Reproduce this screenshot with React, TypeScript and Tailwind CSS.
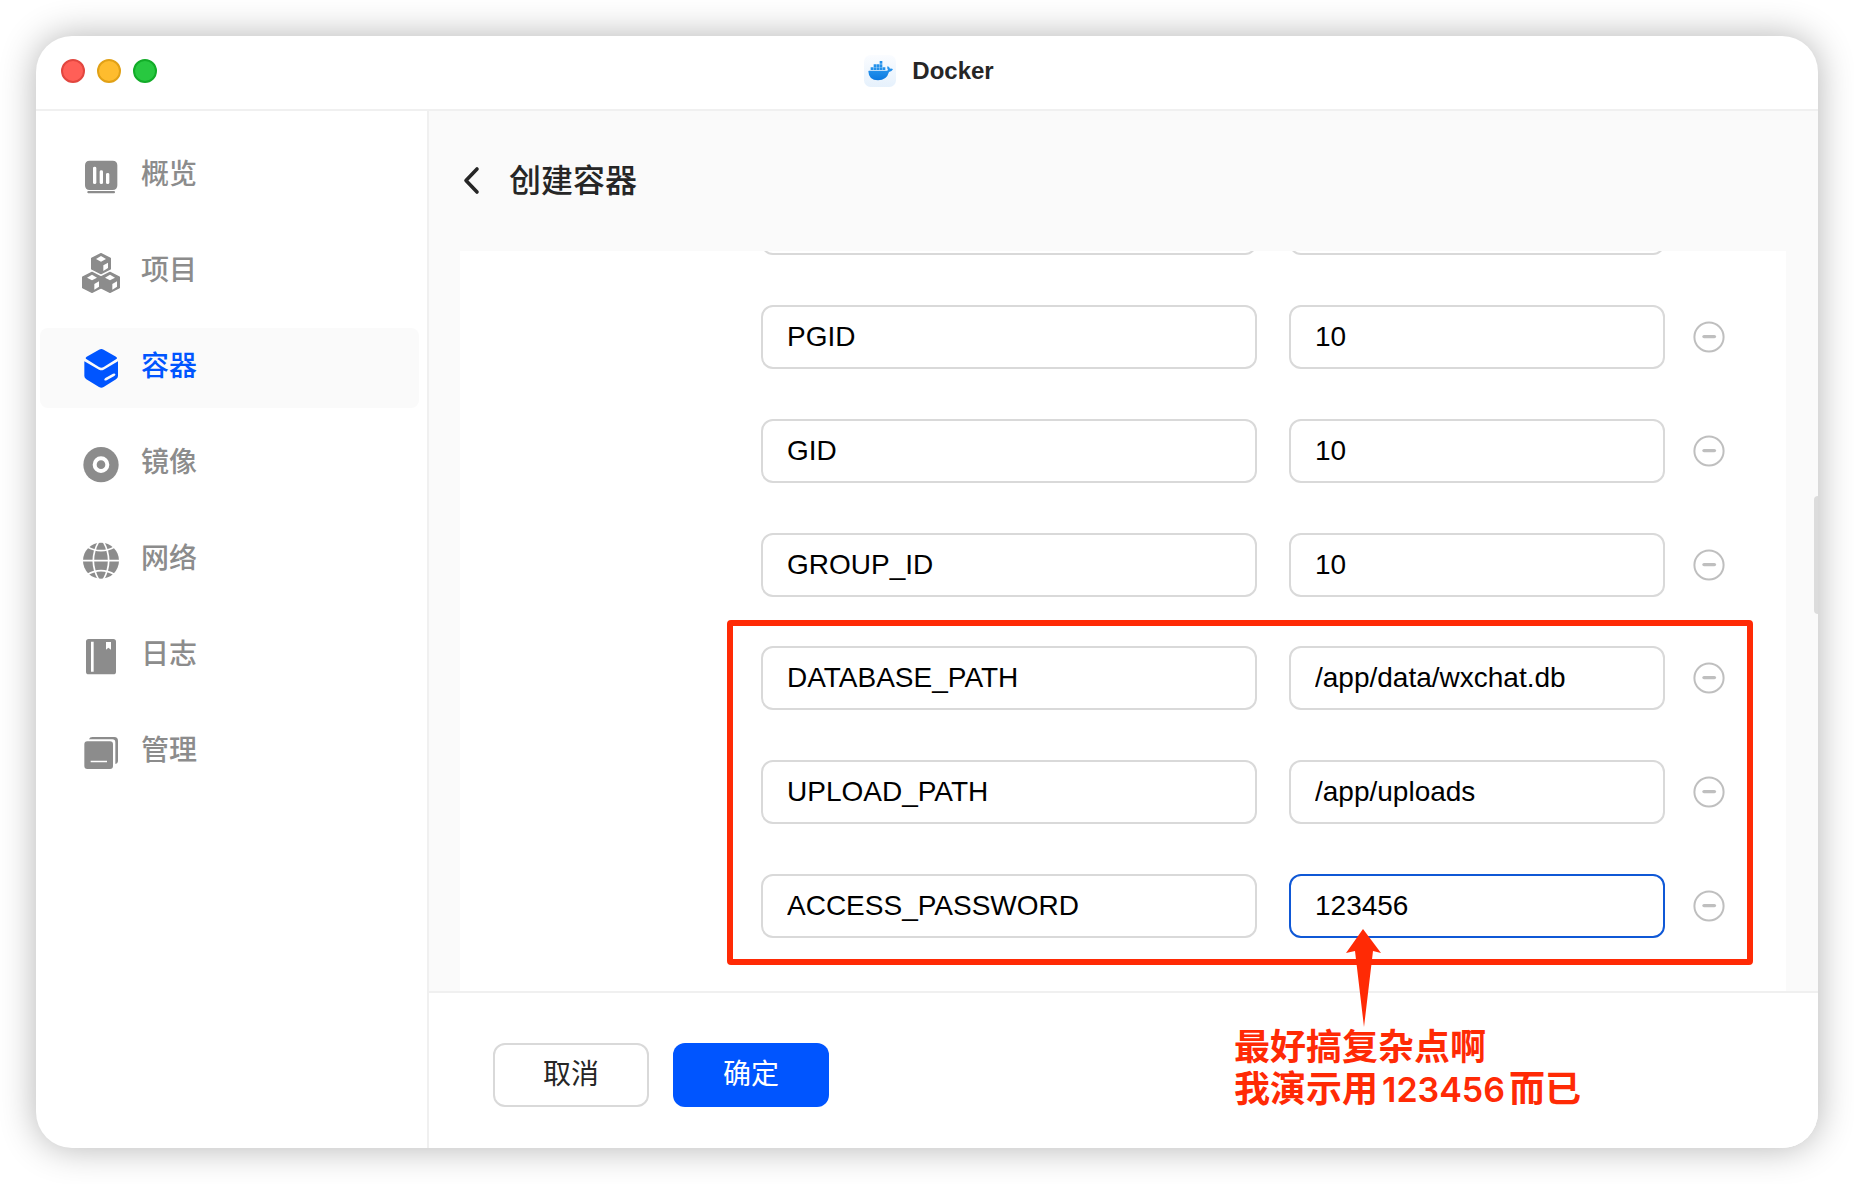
import { useState } from 'react';
import type { ReactNode } from 'react';
import clsx from 'clsx';

interface NavItem {
  id: string;
  label: string;
  icon: ReactNode;
}

interface EnvVar {
  name: string;
  value: string;
}

const OverviewIcon = () => (
  <svg viewBox="0 0 120 120" className="size-10 overflow-visible" fill="currentColor" aria-hidden="true">
    <path
      fillRule="evenodd"
      d="M26 14h69q14 0 14 14v60q0 14-14 14H26q-14 0-14-14V28q0-14 14-14ZM36 36v44q0 4 5 4t5-4V36q0-4-5-4t-5 4Zm20 11v33q0 4 5 4t5-4V47q0-4-5-4t-5 4Zm19 8v25q0 4 5 4t5-4V55q0-4-5-4t-5 4Z"
    />
    <rect x="19" y="105" width="83" height="7" rx="3" />
  </svg>
);

const Cube = ({ x, y }: { x: number; y: number }) => (
  <g transform={`translate(${x} ${y})`}>
    <path d="M30 2 58 16v32L30 62 2 48V16Z" strokeWidth="4" stroke="currentColor" strokeLinejoin="round" />
    <path d="M30 9 45 18 30 26 15 18Z" fill="#fff" />
    <path d="M37 37 51 29V45L37 54Z" fill="#fff" />
  </g>
);

const ProjectIcon = () => (
  <svg viewBox="0 0 120 120" className="size-10 overflow-visible" fill="currentColor" aria-hidden="true">
    <Cube x={30} y={3} />
    <Cube x={3} y={59} />
    <Cube x={57} y={59} />
  </svg>
);

const ContainerIcon = () => (
  <svg viewBox="0 0 120 120" className="size-10 overflow-visible" fill="currentColor" aria-hidden="true">
    <path d="M54 5q7-4 14 0l37 21q6 4 0 8L68 57q-7 5-14 0L17 34q-6-4 0-8Z" />
    <path
      fillRule="evenodd"
      d="M10 40 54 65q7 4 14 0l43-25v44q0 6-6 10L68 117q-7 4-14 0L16 94q-6-4-6-10ZM73 90q-4 3-3 6 2 3 7 1l23-13q4-3 3-6-2-3-7-1Z"
    />
  </svg>
);

const ImageIcon = () => (
  <svg viewBox="0 0 120 120" className="size-10 overflow-visible" fill="currentColor" aria-hidden="true">
    <circle cx="60" cy="62" r="53" />
    <circle cx="60" cy="62" r="19" fill="none" stroke="#fff" strokeWidth="12" />
  </svg>
);

const NetworkIcon = () => (
  <svg viewBox="0 0 120 120" className="size-10 overflow-visible" fill="currentColor" aria-hidden="true">
    <circle cx="60" cy="62" r="54" />
    <g fill="none" stroke="#fff" strokeWidth="5">
      <path d="M4 62h112" />
      <path d="M18 20q42 24 84 0M18 104q42-24 84 0" />
      <path d="M53 5q-32 57 0 114M67 5q32 57 0 114" />
    </g>
  </svg>
);

const LogIcon = () => (
  <svg viewBox="0 0 120 120" className="size-10 overflow-visible" fill="currentColor" aria-hidden="true">
    <path
      fillRule="evenodd"
      d="M23 9h74q8 0 8 8v90q0 8-8 8H23q-8 0-8-8V17q0-8 8-8ZM30 17v90h8V17ZM75 18v23l7-6 8 6V18Z"
    />
  </svg>
);

const ManageIcon = () => (
  <svg viewBox="0 0 120 120" className="size-10 overflow-visible" fill="currentColor" aria-hidden="true">
    <path
      fillRule="evenodd"
      d="M19 28h68q9 0 9 9v65q0 9-9 9H19q-9 0-9-9V37q0-9 9-9ZM29 86v5h49v-5Z"
    />
    <path d="M24 22q2-7 10-7h66q11 0 11 12v61q0 7-8 8V32q0-10-9-10Z" />
  </svg>
);

const DockerLogo = () => (
  <svg viewBox="0 0 96 96" className="size-8" aria-hidden="true">
    <defs>
      <linearGradient id="whale" x1="0" y1="0" x2="0" y2="1">
        <stop offset="0" stopColor="#2f9bf0" />
        <stop offset="1" stopColor="#0b78e0" />
      </linearGradient>
      <linearGradient id="tile" x1="0" y1="0" x2="0" y2="1">
        <stop offset="0" stopColor="#fafcff" />
        <stop offset="1" stopColor="#e6f1fc" />
      </linearGradient>
    </defs>
    <rect width="96" height="96" rx="20" fill="url(#tile)" />
    <g fill="#2491ea">
      <path d="M47 18h8v8h-8z" />
      <path d="M29 28h8v8h-8zM38 28h8v8h-8zM47 28h8v8h-8z" />
      <path d="M20 37h8v8h-8zM29 37h8v8h-8zM38 37h8v8h-8zM47 37h8v8h-8zM56 37h8v8h-8z" />
    </g>
    <path
      d="M15 47h53q3 0 4-2-5-5-1-12 6 3 7 8 6-1 9 2-3 7-12 8Q68 76 42 76 14 76 13 49q0-2 2-2Z"
      fill="url(#whale)"
    />
  </svg>
);

const navItems: NavItem[] = [
  { id: 'overview', label: '概览', icon: <OverviewIcon /> },
  { id: 'project', label: '项目', icon: <ProjectIcon /> },
  { id: 'container', label: '容器', icon: <ContainerIcon /> },
  { id: 'image', label: '镜像', icon: <ImageIcon /> },
  { id: 'network', label: '网络', icon: <NetworkIcon /> },
  { id: 'log', label: '日志', icon: <LogIcon /> },
  { id: 'manage', label: '管理', icon: <ManageIcon /> },
];

const defaultVars: EnvVar[] = [
  { name: '', value: '' },
  { name: 'PGID', value: '10' },
  { name: 'GID', value: '10' },
  { name: 'GROUP_ID', value: '10' },
];

const customVars: EnvVar[] = [
  { name: 'DATABASE_PATH', value: '/app/data/wxchat.db' },
  { name: 'UPLOAD_PATH', value: '/app/uploads' },
  { name: 'ACCESS_PASSWORD', value: '123456' },
];

const fieldClass =
  'h-16 w-full min-w-0 rounded-xl border-2 bg-white px-6 text-[28px] text-black outline-none';

const EnvRow = ({ item, active = false }: { item: EnvVar; active?: boolean }) => (
  <div className="flex items-center gap-7">
    <div className="grid flex-1 grid-cols-[496fr_376fr] gap-8">
      <input aria-label="变量名" defaultValue={item.name} className={clsx(fieldClass, 'border-[#d9d9d9]')} />
      <input
        aria-label="变量值"
        defaultValue={item.value}
        className={clsx(fieldClass, active ? 'border-[#0f58d6]' : 'border-[#d9d9d9]')}
      />
    </div>
    <button type="button" aria-label="删除" className="size-8 shrink-0 text-[#bfbfbf]">
      <svg viewBox="0 0 32 32" fill="none" stroke="currentColor" aria-hidden="true">
        <circle cx="16" cy="16" r="14.6" strokeWidth="2" />
        <path d="M11 15.6h10.4" strokeWidth="3.4" strokeLinecap="round" />
      </svg>
    </button>
  </div>
);

const TitleBar = () => (
  <header className="grid h-[75px] shrink-0 grid-cols-3 items-center border-b-2 border-[#f0f0f0] px-[25px] pb-1">
    <div className="flex gap-3">
      <button type="button" aria-label="关闭" className="size-6 rounded-full border-2 border-[#e2463f] bg-[#ff5f57]" />
      <button type="button" aria-label="最小化" className="size-6 rounded-full border-2 border-[#e1a116] bg-[#febc2e]" />
      <button type="button" aria-label="最大化" className="size-6 rounded-full border-2 border-[#12ac28] bg-[#28c840]" />
    </div>
    <div className="flex items-center justify-center gap-4 pl-1">
      <DockerLogo />
      <span className="text-2xl font-bold text-[#262626]">Docker</span>
    </div>
  </header>
);

const Sidebar = () => {
  const [current, setCurrent] = useState('container');

  return (
    <nav className="flex w-[393px] shrink-0 flex-col gap-4 border-r-2 border-[#f0f0f0] py-[25px] pr-2 pl-1">
      {navItems.map((item) => (
        <button
          key={item.id}
          type="button"
          onClick={() => setCurrent(item.id)}
          className={clsx(
            'flex h-20 items-center gap-5 rounded-lg pl-[41px] text-[28px] font-medium',
            current === item.id ? 'bg-[#fafafa] text-[#0055ff]' : 'text-[#8c8c8c]',
          )}
        >
          {item.icon}
          <span className="pb-0.5">{item.label}</span>
        </button>
      ))}
    </nav>
  );
};

const App = () => {
  return (
    <div className="flex h-screen bg-white p-9 font-['Liberation_Sans','Noto_Sans_CJK_SC',sans-serif]">
      <div className="flex min-w-0 flex-1 flex-col overflow-hidden rounded-[36px] bg-white shadow-[0_0_36px_rgba(0,0,0,0.3)]">
        <TitleBar />
        <div className="flex min-h-0 flex-1">
          <Sidebar />
          <main className="relative flex min-w-0 flex-1 flex-col bg-[#fafafa]">
            <div className="flex h-[140px] shrink-0 items-center gap-[26px] pl-8">
              <button type="button" aria-label="返回" className="text-[#262626]">
                <svg viewBox="0 0 22 32" className="h-8 w-[22px]" fill="none" stroke="currentColor" aria-hidden="true">
                  <path d="M16 4 5 15.500 16 27" strokeWidth="3.600" strokeLinecap="round" strokeLinejoin="round" />
                </svg>
              </button>
              <h1 className="text-[32px] font-medium text-[#262626]">创建容器</h1>
            </div>

            {/* Form is scrolled to the last rows */}
            <form className="mr-8 ml-[31px] flex min-h-0 flex-1 flex-col justify-end gap-[49px] overflow-hidden bg-white pr-[61px] pb-[53px] pl-[301px]">
              <div className="flex flex-col gap-[50px]">
                {defaultVars.map((item, i) => (
                  <EnvRow key={i} item={item} />
                ))}
              </div>
              <div className="relative flex flex-col gap-[50px]">
                {customVars.map((item, i) => (
                  <EnvRow key={item.name} item={item} active={i === customVars.length - 1} />
                ))}
                <div className="pointer-events-none absolute -top-[26px] -right-7 -bottom-[27px] -left-[34px] rounded-sm border-6 border-[#ff2a05]" />
              </div>
            </form>

            <footer className="relative flex h-[157px] shrink-0 gap-6 border-t-2 border-[#f0f0f0] bg-white pt-[50px] pl-16">
              <button
                type="button"
                className="h-16 w-[156px] rounded-xl border-2 border-[#d9d9d9] bg-white text-[28px] text-[#262626]"
              >
                取消
              </button>
              <button type="button" className="h-16 w-[156px] rounded-xl bg-[#0055ff] text-[28px] text-white">
                确定
              </button>

              {/* Hint pointing at the password field */}
              <div className="absolute right-[236px] -top-16 flex w-[348px] flex-col text-[#ff2a05]">
                <svg viewBox="0 0 36 98" className="ml-[112px] h-[98px] w-9" fill="currentColor" aria-hidden="true">
                  <path d="M17 0 35 24 27 22 18 98 9 22 0 24Z" />
                </svg>
                <p className="text-[36px] leading-[42px] font-bold whitespace-nowrap">
                  最好搞复杂点啊
                  <br />
                  我演示用
                  <span className="mx-1 font-['Inter'] text-[34px] font-semibold">123456</span>
                  而已
                </p>
              </div>
            </footer>

            <div className="absolute top-[385px] right-0 h-[118px] w-1 rounded-l bg-[#dcdcdc]" />
          </main>
        </div>
      </div>
    </div>
  );
};

export default App;
